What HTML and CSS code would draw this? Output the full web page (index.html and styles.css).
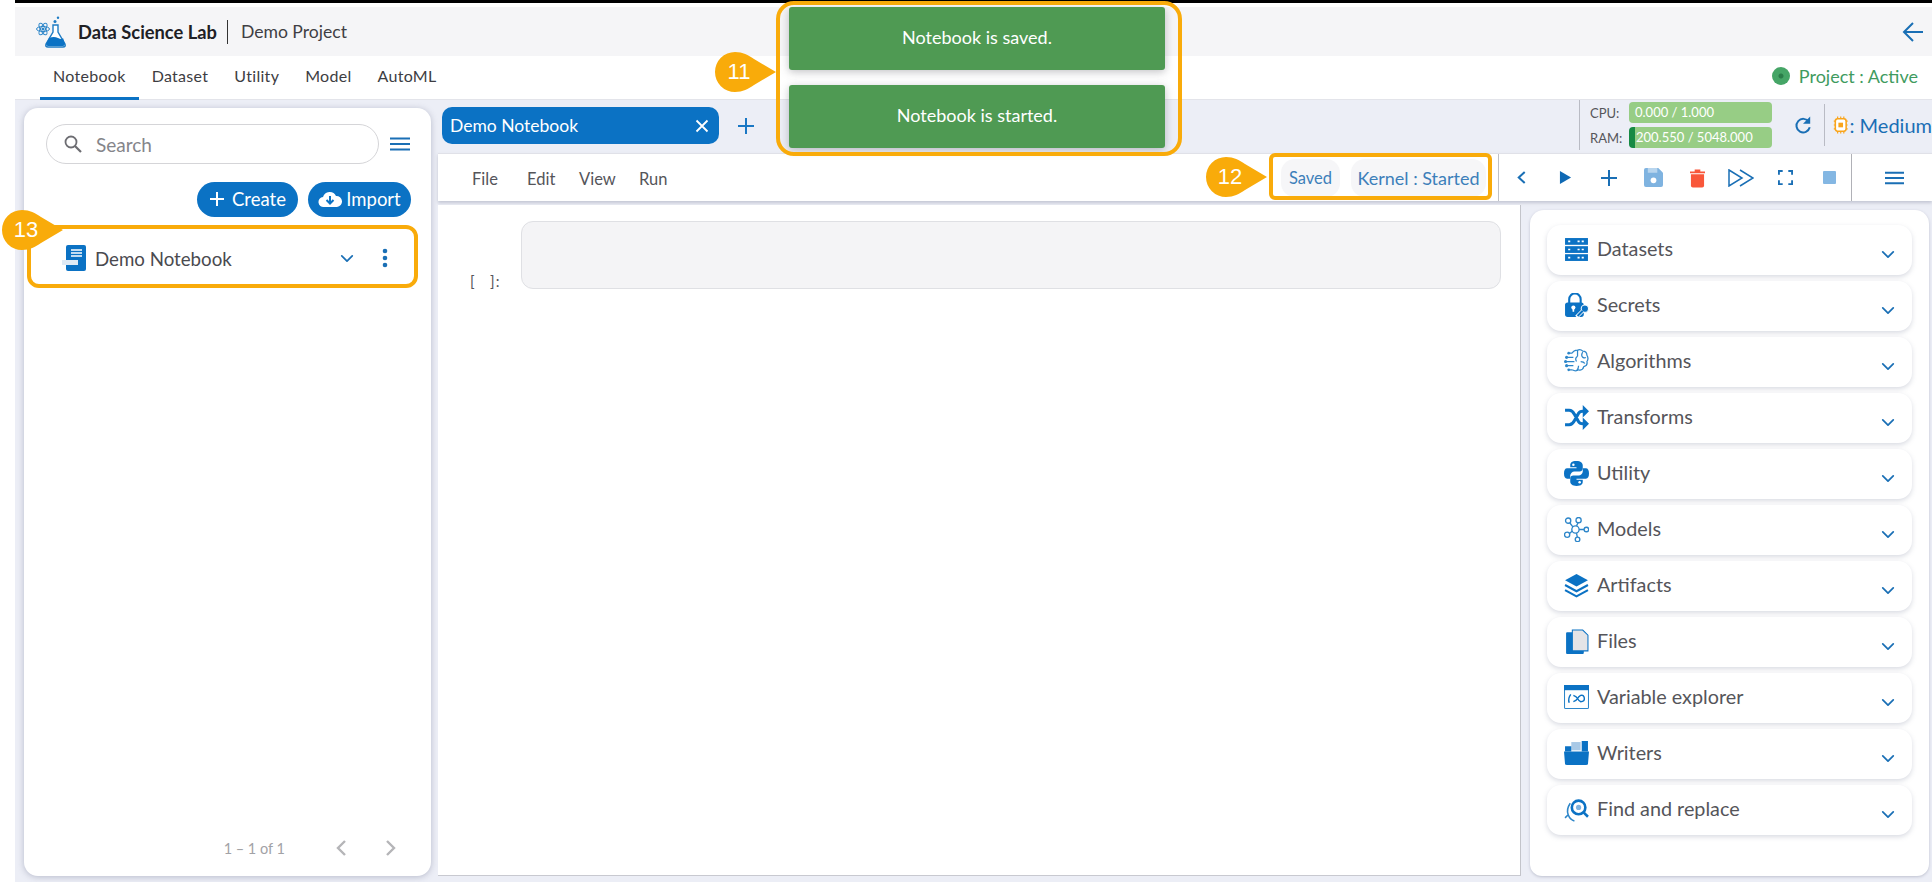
FILE: index.html
```html
<!DOCTYPE html>
<html lang="en">
<head>
<meta charset="utf-8">
<title>Data Science Lab</title>
<link rel="stylesheet" href="styles.css">
</head>
<body>
<svg class="defs" width="0" height="0" aria-hidden="true">
  <symbol id="chev" viewBox="0 0 16 10"><path d="M2 2l6 6 6-6" fill="none" stroke="currentColor" stroke-width="2" stroke-linecap="round" stroke-linejoin="round"/></symbol>
  <symbol id="callout" viewBox="0 0 62 40"><path d="M21 0C29 0 34 3 40 7L62 20 40 33C34 37 29 40 21 40A20 20 0 0 1 21 0Z" fill="#f9ab0a"/></symbol>
</svg>
<div class="app">
  <div class="topline"></div>
  <header class="header">
    <svg class="logo" viewBox="0 0 32 32" width="32" height="32">
      <g fill="none" stroke="#2d86c9" stroke-width="1"><ellipse cx="8" cy="13" rx="6.500" ry="2.500"/><ellipse cx="8" cy="13" rx="6.500" ry="2.500" transform="rotate(60 8 13)"/><ellipse cx="8" cy="13" rx="6.500" ry="2.500" transform="rotate(120 8 13)"/></g>
      <circle cx="8" cy="13" r="1.500" fill="#2d86c9"/>
      <path d="M18 9h5v7l7 12q1 3-2 3H13q-3 0-2-3l7-12z" fill="#fff" stroke="#1f7cc4" stroke-width="1.400"/>
      <path d="M14 22q5-2 9 0t5 0l2 6q0 2-2 2H13q-2 0-2-2z" fill="#0b72c4"/>
      <circle cx="20" cy="5.500" r="1.500" fill="#1f7cc4"/><circle cx="23" cy="1.800" r="1.200" fill="#1f7cc4"/>
    </svg>
    <span class="brand">Data Science Lab</span>
    <span class="brand-sep"></span>
    <span class="project">Demo Project</span>
    <svg class="back" viewBox="0 0 24 24" width="24" height="24"><path d="M22 12H4M12 3l-9 9 9 9" fill="none" stroke="#1a6fb5" stroke-width="2"/></svg>
  </header>
  <nav class="nav">
    <a class="nav-item is-active">Notebook</a>
    <a class="nav-item">Dataset</a>
    <a class="nav-item">Utility</a>
    <a class="nav-item">Model</a>
    <a class="nav-item">AutoML</a>
    <span class="status"><i class="status-dot"></i>Project : Active</span>
  </nav>
  <main class="workspace">
    <aside class="left">
      <div class="search-row">
        <div class="search">
          <svg viewBox="0 0 20 20" width="20" height="20"><circle cx="8" cy="8" r="5.500" fill="none" stroke="#6d6d72" stroke-width="1.800"/><path d="M12 12l6 6" stroke="#6d6d72" stroke-width="2.200"/></svg>
          <span>Search</span>
        </div>
        <svg class="burger" viewBox="0 0 20 14" width="20" height="14"><path d="M0 1.500h20M0 7h20M0 12.500h20" stroke="#1a6fb5" stroke-width="2"/></svg>
      </div>
      <div class="actions">
        <button class="pill pill-create"><svg viewBox="0 0 16 16" width="16" height="16"><path d="M8 1v14M1 8h14" stroke="#fff" stroke-width="2"/></svg>Create</button>
        <button class="pill pill-import"><svg viewBox="0 0 24 18" width="24" height="18"><path d="M6 17a5 5 0 0 1-1-10 7 7 0 0 1 13-1 5.500 5.500 0 0 1 1 11z" fill="#fff"/><path d="M12 6v7M8.500 10l3.500 3.500 3.500-3.500" fill="none" stroke="#0b72c4" stroke-width="2"/></svg>Import</button>
      </div>
      <div class="nb-item">
        <svg class="nb-icon" viewBox="0 0 24 26" width="24" height="26"><path d="M4 2q0-2 2-2h16q2 0 2 2v22q0 2-2 2H6q-2 0-2-2z" fill="#0b72c4"/><path d="M9 5h11M9 8h11M9 11h11" stroke="#fff" stroke-width="1.500"/><rect x="0" y="15" width="16" height="5" fill="#dfeaf5"/></svg>
        <span class="nb-name">Demo Notebook</span>
        <svg class="nb-chev" width="14" height="9"><use href="#chev"/></svg>
        <svg class="nb-dots" viewBox="0 0 6 20" width="6" height="20"><circle cx="3" cy="3" r="2.300"/><circle cx="3" cy="10" r="2.300"/><circle cx="3" cy="17" r="2.300"/></svg>
      </div>
      <div class="pager">
        <span>1 – 1 of 1</span>
        <svg viewBox="0 0 12 18" width="12" height="18"><path d="M10 2L3 9l7 7" fill="none" stroke="#b5b5b8" stroke-width="2.400"/></svg>
        <svg viewBox="0 0 12 18" width="12" height="18"><path d="M2 2l7 7-7 7" fill="none" stroke="#b5b5b8" stroke-width="2.400"/></svg>
      </div>
    </aside>
    <section class="center">
      <div class="tabbar">
        <div class="tab"><span>Demo Notebook</span><svg viewBox="0 0 14 14" width="14" height="14"><path d="M1.500 1.500l11 11M12.500 1.500l-11 11" stroke="#fff" stroke-width="1.800"/></svg></div>
        <svg class="tab-add" viewBox="0 0 16 16" width="16" height="16"><path d="M8 0v16M0 8h16" stroke="#1a77c4" stroke-width="2"/></svg>
        <div class="resources">
          <div class="meters">
            <div class="meter"><span class="meter-label">CPU:</span><span class="meter-bar">0.000 / 1.000</span></div>
            <div class="meter"><span class="meter-label">RAM:</span><span class="meter-bar meter-ram">200.550 / 5048.000</span></div>
          </div>
          <svg class="refresh" viewBox="0 0 20 22" width="18" height="21"><path d="M16.500 7A7.500 7.500 0 1 0 17.500 13" fill="none" stroke="#1a6fb5" stroke-width="2.200"/><path d="M18 1v8h-8z" fill="#1a6fb5"/></svg>
          <div class="compute">
            <svg viewBox="0 0 20 24" width="18" height="24"><path d="M6 1v22M10 1v22M14 1v22M1 7h18M1 12h18M1 17h18" stroke="#f9a41a" stroke-width="1.500"/><rect x="3" y="4" width="14" height="16" rx="3" fill="#fff" stroke="#f9a41a" stroke-width="2"/><rect x="7" y="9" width="6" height="6" fill="#f9a41a"/></svg>
            <span>: Medium</span>
          </div>
        </div>
      </div>
      <div class="toolbar">
        <div class="menu"><span>File</span><span>Edit</span><span>View</span><span>Run</span></div>
        <div class="state">
          <span class="chip chip-saved">Saved</span>
          <span class="chip chip-kernel">Kernel : Started</span>
        </div>
        <div class="tools">
          <span class="tool"><svg viewBox="0 0 12 16" width="11" height="15"><path d="M9.500 2L3 8l6.500 6" fill="none" stroke="#1a6fb5" stroke-width="2.200"/></svg></span>
          <span class="tool"><svg viewBox="0 0 14 16" width="13" height="15"><path d="M1 1l12 7-12 7z" fill="#0f69b4"/></svg></span>
          <span class="tool"><svg viewBox="0 0 16 16" width="16" height="16"><path d="M8 0v16M0 8h16" stroke="#1a6fb5" stroke-width="2"/></svg></span>
          <span class="tool"><svg viewBox="0 0 20 20" width="19" height="19"><path d="M2 0h13l5 5v13q0 2-2 2H2q-2 0-2-2V2q0-2 2-2z" fill="#7fb3e0"/><rect x="4" y="0" width="10" height="5" fill="#fff" opacity=".45"/><circle cx="10" cy="13" r="3" fill="#fff"/></svg></span>
          <span class="tool"><svg viewBox="0 0 16 20" width="15" height="20"><path d="M0 3h16v2H0zM5 1h6v2H5z" fill="#f9573a"/><path d="M1 6h14v12q0 2-2 2H3q-2 0-2-2z" fill="#f9573a"/></svg></span>
          <span class="tool"><svg viewBox="0 0 26 18" width="26" height="18"><path d="M1 1l13 8-13 8zM12 1l13 8-13 8" fill="none" stroke="#1a6fb5" stroke-width="1.500"/></svg></span>
          <span class="tool"><svg viewBox="0 0 16 16" width="15" height="15"><path d="M1 5V1h4M11 1h4v4M15 11v4h-4M5 15H1v-4" fill="none" stroke="#1a6fb5" stroke-width="2"/></svg></span>
          <span class="tool"><i class="stop"></i></span>
        </div>
        <div class="tool-menu"><svg viewBox="0 0 20 14" width="19" height="14"><path d="M0 1.500h20M0 7h20M0 12.500h20" stroke="#1a6fb5" stroke-width="2"/></svg></div>
      </div>
      <div class="panes">
        <div class="canvas">
          <span class="prompt">[ &nbsp;&nbsp;]:</span>
          <div class="cell"></div>
        </div>
        <div class="side">
          <div class="card"><svg class="card-icon" viewBox="0 0 24 24"><rect x="1" y="1" width="22" height="6.500" fill="#0b72c4"/><rect x="1" y="8.800" width="22" height="6.500" fill="#0b72c4"/><rect x="1" y="16.500" width="22" height="6.500" fill="#0b72c4"/><path d="M4 4.200h2M13 4.200h2M17 4.200h2M4 12h2M13 12h2M17 12h2M4 19.800h2M13 19.800h2M17 19.800h2" stroke="#fff" stroke-width="1.500"/></svg><span>Datasets</span><svg class="card-chev"><use href="#chev"/></svg></div>
          <div class="card"><svg class="card-icon" viewBox="0 0 24 24"><path d="M5 10V6a5.500 5.500 0 0 1 11 0v4" fill="none" stroke="#0b72c4" stroke-width="2"/><rect x="1" y="9" width="18" height="14" rx="2.500" fill="#0b72c4"/><circle cx="9" cy="14" r="2" fill="#fff"/><rect x="8.200" y="14" width="1.600" height="4" fill="#fff"/><circle cx="20" cy="15" r="3.500" fill="#0b72c4" stroke="#fff"/><path d="M18 17l-6 6" stroke="#fff" stroke-width="3.500"/><path d="M18 17l-5 5" stroke="#0b72c4" stroke-width="2"/></svg><span>Secrets</span><svg class="card-chev"><use href="#chev"/></svg></div>
          <div class="card"><svg class="card-icon" viewBox="0 0 24 24"><g fill="none" stroke="#2d86c9" stroke-width="1.200"><path d="M8 4q1-3 5-3 3-1 5 1 4 0 4 4 2 3 0 6 1 4-3 5-1 4-5 3-3 2-6 0"/><path d="M13 1v6M18 3q-2 3 0 5 2 1 3 0M13 7q-3 2-1 5M16 12q3 0 4 2M14 16q0 3-2 5"/><path d="M9 8H3M10 12H1M9 16H3M8 4H5M8 20H5"/></g><g fill="#2d86c9"><circle cx="2.500" cy="8" r="1.500"/><circle cx="1.500" cy="12" r="1.500"/><circle cx="2.500" cy="16" r="1.500"/><circle cx="4.500" cy="4" r="1.300"/><circle cx="4.500" cy="20" r="1.300"/></g></svg><span>Algorithms</span><svg class="card-chev"><use href="#chev"/></svg></div>
          <div class="card"><svg class="card-icon" viewBox="0 0 24 24"><path d="M1 5h4q3 0 5 4l4 7q1 2 4 2h2M1 19h4q3 0 5-4l4-7q1-2 4-2h2" fill="none" stroke="#0b72c4" stroke-width="3"/><path d="M18 0l6 6-6 6zM18 12l6 6-6 6z" fill="#0b72c4"/></svg><span>Transforms</span><svg class="card-chev"><use href="#chev"/></svg></div>
          <div class="card"><svg class="card-icon" viewBox="0 0 24 24"><path d="M12 0c-5 0-6 2-6 4v2h6v1H3c-2 0-3 2-3 5s1 5 3 5h3v-3c0-2 2-4 4-4h5c2 0 3-1 3-3V4c0-2-2-4-6-4z" fill="#0b72c4"/><path d="M12 24c5 0 6-2 6-4v-2h-6v-1h9c2 0 3-2 3-5s-1-5-3-5h-3v3c0 2-2 4-4 4H9c-2 0-3 1-3 3v3c0 2 2 4 6 4z" fill="#0b72c4"/><circle cx="9" cy="3.500" r="1.200" fill="#fff"/><circle cx="15" cy="20.500" r="1.200" fill="#fff"/></svg><span>Utility</span><svg class="card-chev"><use href="#chev"/></svg></div>
          <div class="card"><svg class="card-icon" viewBox="0 0 24 24"><g fill="none" stroke="#2d86c9" stroke-width="1.300"><circle cx="11" cy="12" r="3.500"/><circle cx="4" cy="3.500" r="2.500"/><circle cx="14" cy="3" r="2.500"/><circle cx="21.500" cy="12" r="2.200"/><circle cx="3" cy="17" r="2.500"/><circle cx="13" cy="21.500" r="2.200"/><path d="M5.500 5.500l3 4M13.500 5.500l-1.500 3M14.500 12h4.800M5 16l3-2.500M12 15.500l.8 3.800"/></g></svg><span>Models</span><svg class="card-chev"><use href="#chev"/></svg></div>
          <div class="card"><svg class="card-icon" viewBox="0 0 24 24"><path d="M12 1l11 6-11 6L1 7z" fill="#0b72c4"/><path d="M1 11.500l11 6 11-6M1 16.500l11 6 11-6" fill="none" stroke="#0b72c4" stroke-width="2"/></svg><span>Artifacts</span><svg class="card-chev"><use href="#chev"/></svg></div>
          <div class="card"><svg class="card-icon" viewBox="0 0 24 24"><path d="M8 1h10l5 5v15H8z" fill="#e4e4e7" stroke="#0b72c4"/><path d="M8 3H3q-1 0-1 1v19q0 1 1 1h15q1 0 1-1v-2H8z" fill="#0b72c4"/></svg><span>Files</span><svg class="card-chev"><use href="#chev"/></svg></div>
          <div class="card"><svg class="card-icon" viewBox="0 0 24 24"><rect x=".5" y=".5" width="23" height="22" rx="1" fill="#fff" stroke="#2d86c9"/><rect x="0" y="0" width="24" height="5" fill="#0b72c4"/><path d="M6.500 9q-3 4-1.500 8M9 10q3 1 4 3t3 3q4 0 3.500-3.500T16 10q-2 1-3 3t-4 3" fill="none" stroke="#0b72c4" stroke-width="1.400"/></svg><span>Variable explorer</span><svg class="card-chev"><use href="#chev"/></svg></div>
          <div class="card"><svg class="card-icon" viewBox="0 0 24 24"><path d="M7 1h9v8H7z" fill="#a9c9e6"/><path d="M1 5h6v5H1zM17 0h6v10h-6z" fill="#0b72c4"/><path d="M0 10h24l-1 12q0 1-2 1H3q-2 0-2-1z" fill="#0b72c4"/></svg><span>Writers</span><svg class="card-chev"><use href="#chev"/></svg></div>
          <div class="card"><svg class="card-icon" viewBox="0 0 24 24"><circle cx="14" cy="10" r="6.500" fill="none" stroke="#0b72c4" stroke-width="2.500"/><circle cx="14" cy="10" r="2.500" fill="#7fb3e0"/><path d="M19 15l4 4" stroke="#0b72c4" stroke-width="2.500"/><path d="M6 6q-4 6-2 11t6 6M4 17l-3 3" fill="none" stroke="#2d86c9" stroke-width="1.500"/></svg><span>Find and replace</span><svg class="card-chev"><use href="#chev"/></svg></div>
        </div>
      </div>
    </section>
  </main>
</div>

<div class="toasts">
  <div class="toast">Notebook is saved.</div>
  <div class="toast">Notebook is started.</div>
</div>
<div class="mark mark-toasts"></div>
<div class="mark mark-kernel"></div>
<div class="mark mark-item"></div>
<div class="callout callout-11"><svg width="62" height="40"><use href="#callout"/></svg><span>11</span></div>
<div class="callout callout-12"><svg width="62" height="40"><use href="#callout"/></svg><span>12</span></div>
<div class="callout callout-13"><svg width="62" height="40"><use href="#callout"/></svg><span>13</span></div>
</body>
</html>
```

FILE: styles.css
```css
* { box-sizing: border-box; }
html, body { margin: 0; height: 100%; }
body {
  position: relative;
  width: 1932px;
  height: 882px;
  overflow: hidden;
  background: #fff;
  font-family: "Lato", "Open Sans", sans-serif;
  color: #4a4a4f;
}
.defs { position: absolute; }
.app {
  margin-left: 15px;
  height: 882px;
  display: flex;
  flex-direction: column;
}
.topline { height: 7px; flex: none; border-top: 3px solid #000; background: #fff; }

.header {
  height: 49px;
  flex: none;
  background: #f5f5f7;
  display: flex;
  align-items: center;
  padding: 0 7px 0 20px;
}
.logo { flex: none; margin-right: 11px; }
.brand { font-size: 18.300px; font-weight: 700; color: #202024; }
.brand-sep { width: 1px; height: 24px; background: #333; margin: 0 13px 0 10px; }
.project { font-size: 17.600px; color: #3f3f44; }
.back { margin-left: auto; }

.nav {
  height: 44px;
  flex: none;
  display: flex;
  align-items: stretch;
  padding-left: 25px;
  background: #fff;
  border-bottom: 1px solid #e3e4ea;
}
.nav-item {
  padding: 0 13px;
  font-size: 16px;
  line-height: 40px;
  color: #3d3d42;
  border-bottom: 3px solid transparent;
  margin-bottom: -1px;
  letter-spacing: .3px;
}
.nav-item.is-active { border-bottom-color: #0b72c4; }
.status {
  margin-left: auto;
  padding: 0 14px 3px 0;
  display: flex;
  align-items: center;
  gap: 9px;
  font-size: 18px;
  color: #3f9b5f;
}
.status-dot {
  width: 18px;
  height: 18px;
  border-radius: 50%;
  background: radial-gradient(circle, #2a7d49 0 2px, #45a566 3px);
}

.workspace {
  flex: 1;
  min-height: 0;
  display: flex;
  padding: 7px 0 6px 9px;
  background: #eceef6;
}
.left {
  width: 407px;
  flex: none;
  margin-top: 1px;
  background: #fff;
  border-radius: 14px;
  box-shadow: 0 1px 6px rgba(120, 125, 150, .45);
  padding: 16px 20px 19px 22px;
  display: flex;
  flex-direction: column;
}
.search-row { display: flex; align-items: center; gap: 11px; }
.search {
  width: 333px;
  height: 40px;
  border: 1px solid #d5d5d8;
  border-radius: 20px;
  display: flex;
  align-items: center;
  padding-left: 16px;
  gap: 13px;
  font-size: 19px;
  color: #85858a;
}
.burger { flex: none; }
.actions { display: flex; justify-content: flex-end; gap: 10px; margin-top: 18px; }
.pill {
  height: 35px;
  border: 0;
  border-radius: 18px;
  background: #0b72c4;
  color: #fff;
  font: 18.500px "Lato", sans-serif;
  display: flex;
  align-items: center;
  justify-content: center;
  gap: 7px;
  padding: 0 0 2px;
}
.pill-create { width: 101px; }
.pill-import { width: 103px; gap: 4px; }
.nb-item {
  margin: 16px 0 0 -10px;
  height: 50px;
  display: flex;
  align-items: center;
  padding: 0 22px 0 26px;
}
.nb-icon { flex: none; }
.nb-name { margin: 2px 0 0 9px; font-size: 18.700px; color: #4a4a4f; }
.nb-chev { margin-left: auto; color: #1a6fb5; }
.nb-dots { margin: 0 1px 0 28px; fill: #1a6fb5; }
.pager {
  margin-top: auto;
  display: flex;
  align-items: center;
  justify-content: flex-end;
  gap: 38px;
  padding-right: 14px;
  font-size: 14.500px;
  color: #a2a2a6;
}
.pager span { margin-right: 12px; }

.center { flex: 1; min-width: 0; margin-left: 7px; display: flex; flex-direction: column; }
.tabbar { height: 46px; flex: none; display: flex; align-items: flex-start; padding-left: 4px; }
.tab {
  width: 277px;
  height: 37px;
  background: #0b72c4;
  border-radius: 10px;
  color: #fff;
  font-size: 17.500px;
  display: flex;
  align-items: center;
  justify-content: space-between;
  padding: 0 10px 0 8px;
}
.tab-add { margin: 11px 0 0 19px; }
.resources { margin-left: auto; display: flex; align-items: center; height: 50px; margin-top: -7px; }
.meters {
  display: flex;
  flex-direction: column;
  gap: 4px;
  border-left: 1px solid #b9bbc4;
  padding: 2px 0 2px 10px;
  height: 50px;
}
.meter { display: flex; align-items: center; height: 21px; }
.meter-label { width: 39px; font-size: 13px; color: #55555a; }
.meter-bar {
  width: 143px;
  height: 21px;
  line-height: 21px;
  border-radius: 4px;
  background: #97cd85;
  color: #fff;
  font-size: 13px;
  padding-left: 6px;
}
.meter-ram { border-left: 6px solid #168a44; padding-left: 1px; }
.refresh { margin: 0 12px 0 22px; flex: none; }
.compute {
  display: flex;
  align-items: center;
  gap: 1px;
  height: 42px;
  border-left: 1px solid #b9bbc4;
  padding-left: 8px;
  width: 108px;
  font-size: 20px;
  color: #1a6fb5;
  white-space: nowrap;
}
.toolbar {
  height: 48px;
  flex: none;
  background: #fff;
  border-top: 1px solid #e0e1e8;
  box-shadow: 0 2px 3px rgba(120, 125, 150, .35);
  display: flex;
  align-items: center;
  position: relative;
}
.menu {
  display: grid;
  grid-template-columns: 55px 52px 60px auto;
  padding: 2px 0 0 34px;
  font-size: 16.500px;
  color: #55555a;
}
.state { margin-left: auto; display: flex; gap: 11px; margin-right: 12px; }
.chip {
  height: 38px;
  line-height: 38px;
  border-radius: 14px;
  background: #f6f6f8;
  color: #3d7fba;
  text-align: center;
}
.chip-saved { width: 59px; font-size: 16.500px; }
.chip-kernel { width: 135px; font-size: 18px; }
.tools {
  display: flex;
  height: 100%;
  border-left: 1px solid #bfc0c6;
  border-right: 1px solid #b0b1b7;
}
.tool { width: 44px; display: flex; align-items: center; justify-content: center; }
.stop { width: 13px; height: 13px; background: #84b7e3; border-radius: 1px; }
.tool-menu { width: 80px; display: flex; align-items: center; padding-left: 33px; }

.panes { flex: 1; min-height: 0; display: flex; gap: 9px; margin-top: 4px; }
.canvas {
  width: 1083px;
  flex: none;
  background: #fff;
  border-right: 1px solid #c3c4ca;
  border-bottom: 1px solid #c8c9d0;
  padding: 16px 19px 0 83px;
  position: relative;
  display: flex;
  align-items: flex-start;
}
.prompt { position: absolute; left: 32px; top: 67px; font-size: 15px; color: #55555a; letter-spacing: 1px; }
.cell {
  flex: 1;
  height: 68px;
  background: #f4f4f6;
  border: 1px solid #dfe0e4;
  border-radius: 12px;
}
.side {
  width: 399px;
  flex: none;
  margin-top: 5px;
  background: #fff;
  border-radius: 14px 14px 12px 12px;
  box-shadow: 0 1px 3px rgba(120, 125, 150, .4);
  padding: 15px 17px 0 17px;
  display: flex;
  flex-direction: column;
  gap: 6px;
}
.card {
  height: 50px;
  flex: none;
  border-radius: 14px;
  background: #fff;
  box-shadow: 0 2px 5px rgba(120, 125, 150, .28);
  display: flex;
  align-items: center;
  padding: 0 17px 0 17px;
  font-size: 19.800px;
  color: #55555a;
}
.card span { margin: -5px 0 0 8px; }
.card-icon { width: 25px; height: 25px; flex: none; margin-top: -2px; }
.card-chev { width: 14px; height: 9px; margin: 8px 0 0 auto; color: #1a6fb5; }

.toasts {
  position: absolute;
  left: 789px;
  top: 7px;
  width: 376px;
  display: flex;
  flex-direction: column;
  gap: 15px;
}
.toast {
  height: 63px;
  background: #4f9a53;
  border-radius: 3px;
  box-shadow: 0 2px 8px rgba(80, 80, 90, .35);
  color: #fff;
  font-size: 18px;
  line-height: 61px;
  text-align: center;
}
.mark { position: absolute; border: 4px solid #f9ab0a; border-radius: 12px; }
.mark-toasts { left: 776px; top: 1px; width: 406px; height: 155px; border-radius: 18px; }
.mark-kernel { left: 1269px; top: 153px; width: 223px; height: 47px; border-radius: 6px; }
.mark-item { left: 27px; top: 225px; width: 391px; height: 63px; }
.callout { position: absolute; width: 62px; height: 40px; }
.callout svg { display: block; }
.callout span {
  position: absolute;
  left: 0;
  top: 0;
  width: 50px;
  text-align: center;
  color: #fff;
  font: 22px/40px "Liberation Sans", sans-serif;
}
.callout-11 { left: 714px; top: 52px; }
.callout-12 { left: 1205px; top: 157px; }
.callout-13 { left: 1px; top: 210px; }
```
